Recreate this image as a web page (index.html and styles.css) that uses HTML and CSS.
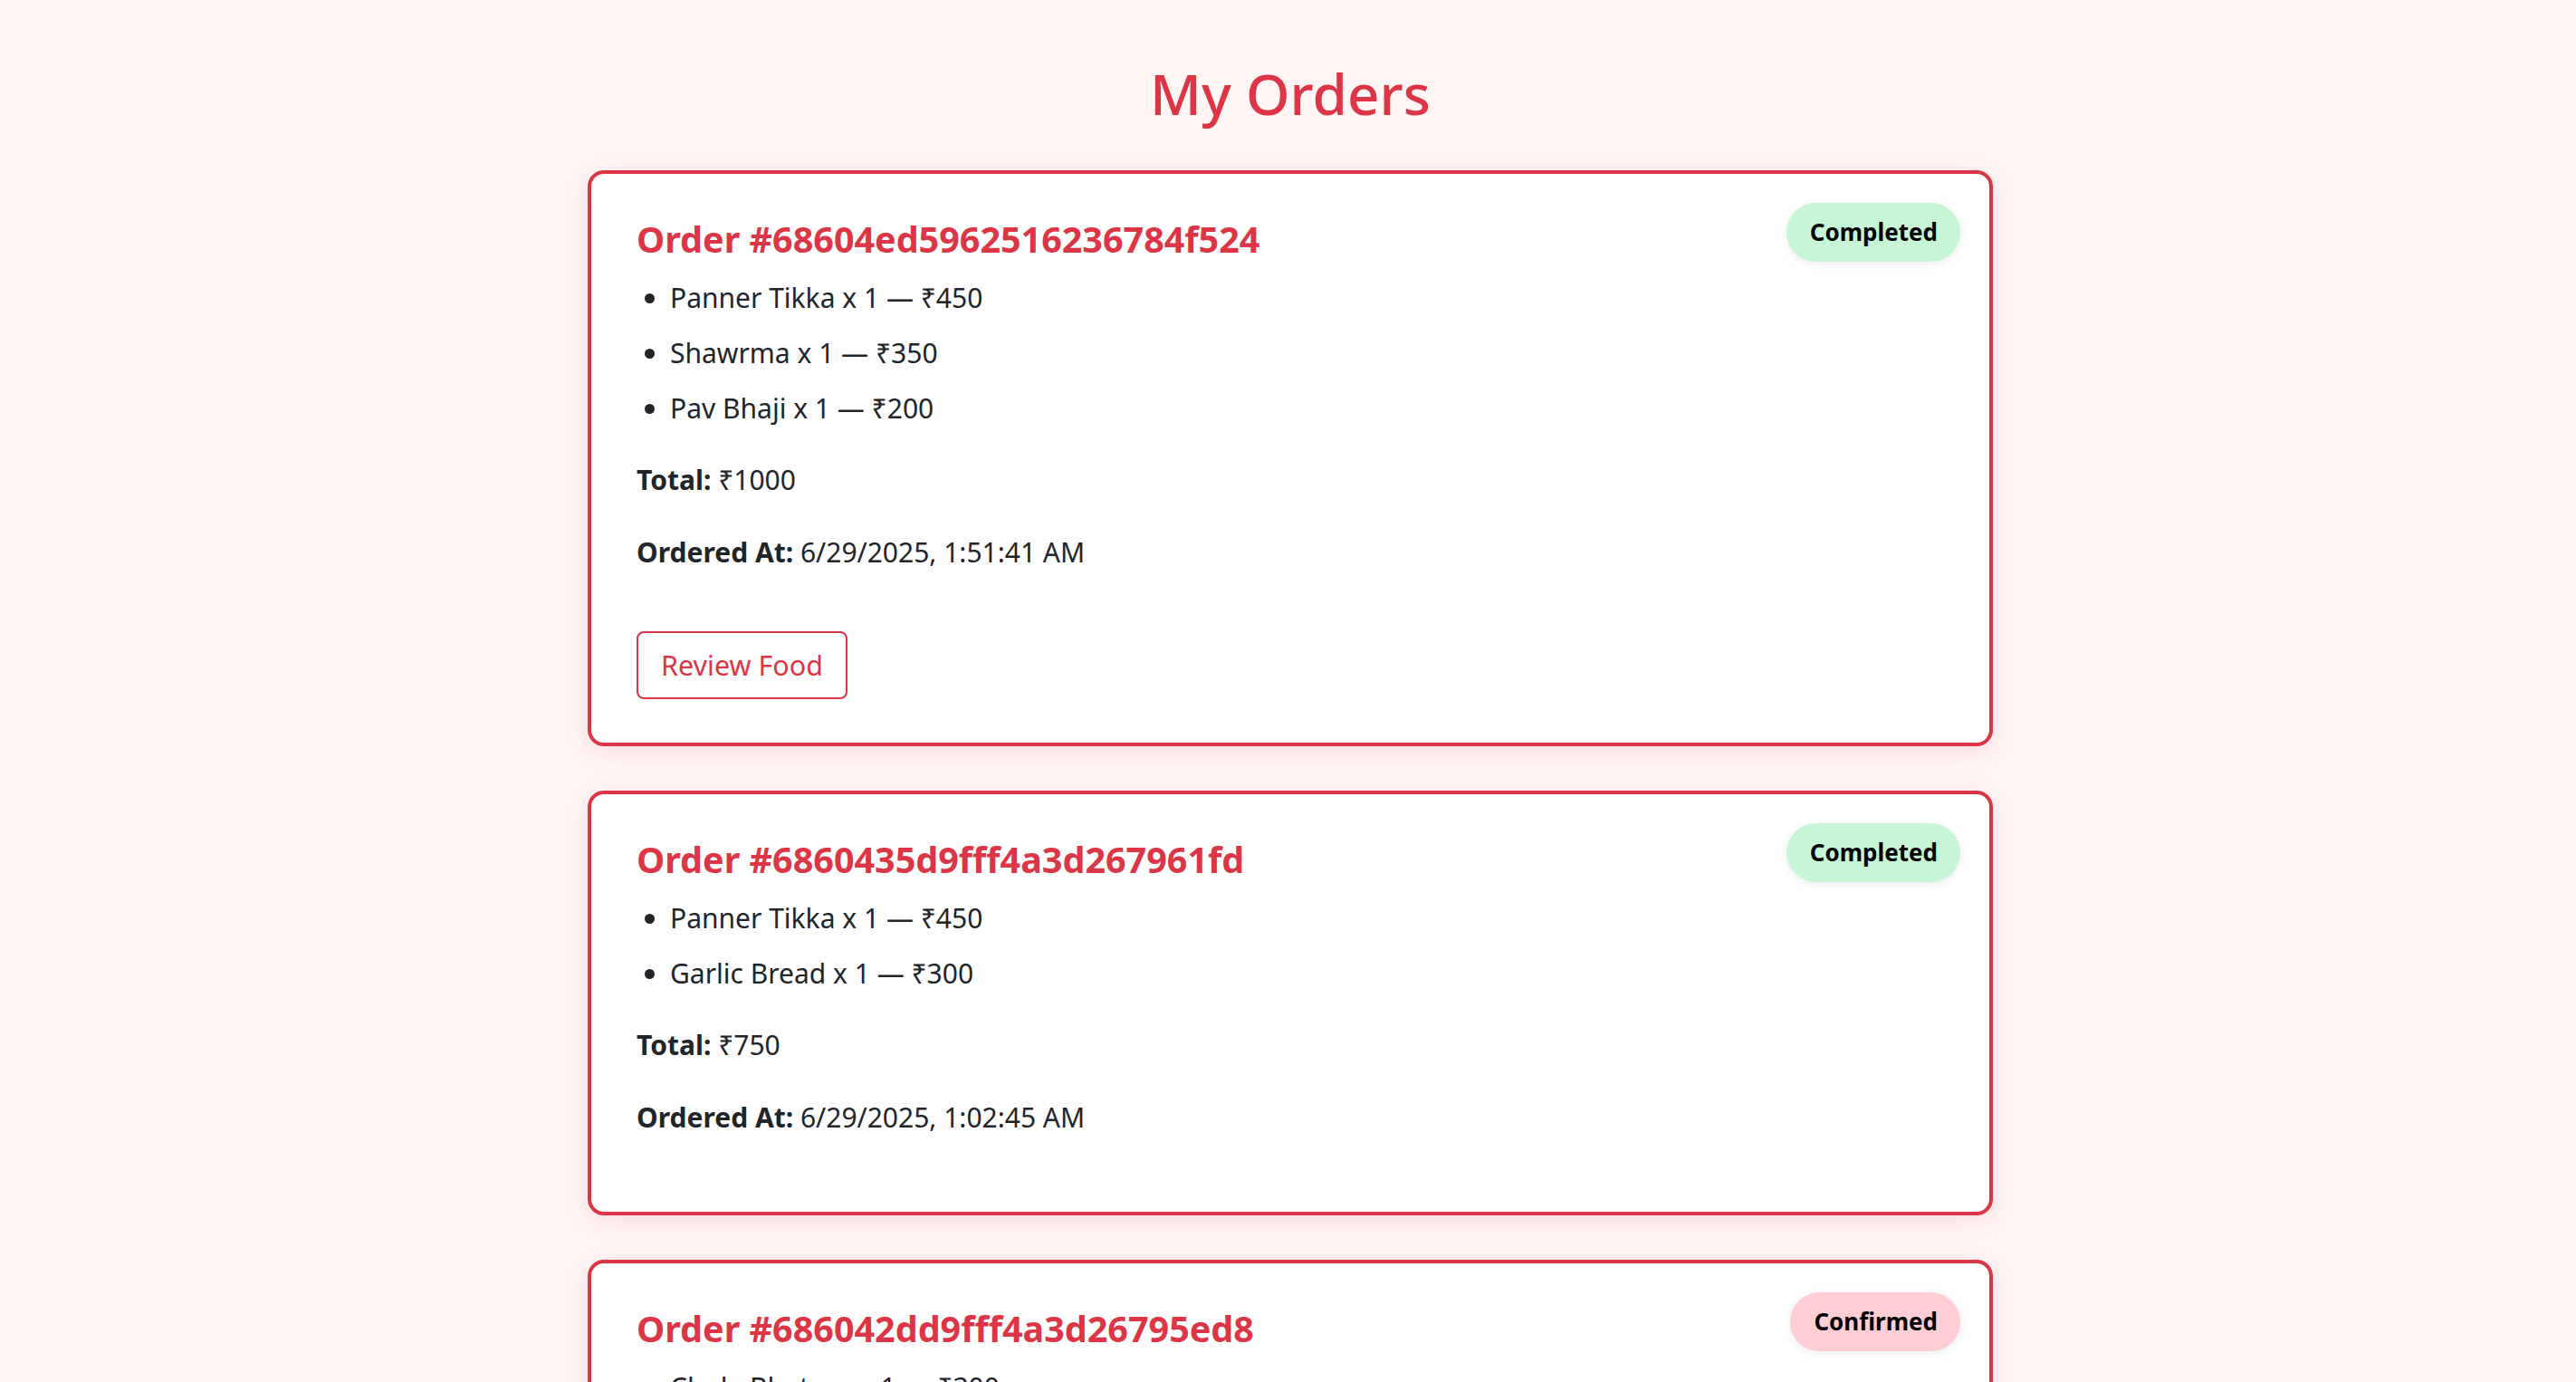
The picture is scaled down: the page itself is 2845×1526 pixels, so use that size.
FILE: index.html
```html
<!DOCTYPE html>
<html lang="en">
<head>
<meta charset="utf-8">
<title>My Orders</title>
<link rel="stylesheet" href="styles.css">
</head>
<body>
<main class="page">
  <h1 class="page-title">My Orders</h1>
  <section class="orders">
    <article class="order-card">
      <span class="status status-completed">Completed</span>
      <h3 class="order-id">Order #68604ed5962516236784f524</h3>
      <ul class="items">
        <li>Panner Tikka x 1 — ₹450</li>
        <li>Shawrma x 1 — ₹350</li>
        <li>Pav Bhaji x 1 — ₹200</li>
      </ul>
      <p class="meta"><strong>Total:</strong> ₹1000</p>
      <p class="meta meta-date"><strong>Ordered At:</strong> 6/29/2025, 1:51:41 AM</p>
      <button class="review-btn" type="button">Review Food</button>
    </article>
    <article class="order-card">
      <span class="status status-completed">Completed</span>
      <h3 class="order-id">Order #6860435d9fff4a3d267961fd</h3>
      <ul class="items">
        <li>Panner Tikka x 1 — ₹450</li>
        <li>Garlic Bread x 1 — ₹300</li>
      </ul>
      <p class="meta"><strong>Total:</strong> ₹750</p>
      <p class="meta meta-date"><strong>Ordered At:</strong> 6/29/2025, 1:02:45 AM</p>
    </article>
    <article class="order-card">
      <span class="status status-confirmed">Confirmed</span>
      <h3 class="order-id">Order #686042dd9fff4a3d26795ed8</h3>
      <ul class="items">
        <li>Chole Bhature x 1 — ₹300</li>
      </ul>
      <p class="meta"><strong>Total:</strong> ₹300</p>
      <p class="meta meta-date"><strong>Ordered At:</strong> 6/29/2025, 12:58:10 AM</p>
    </article>
  </section>
</main>
</body>
</html>
```
FILE: styles.css
```css
* { box-sizing: border-box; }

html, body {
  margin: 0;
  padding: 0;
  background: #fff5f5;
}

body {
  font-family: "Noto Sans", "Open Sans", sans-serif;
  color: #212529;
  padding-left: 5px;
}

.page {
  width: 1552px;
  margin: 0 auto;
  padding-bottom: 60px;
}

.page-title {
  margin: 70px 0 52px;
  font-size: 62px;
  line-height: 66px;
  font-weight: 500;
  color: #dc3545;
  text-align: center;
}

.orders {
  display: flex;
  flex-direction: column;
  gap: 49px;
}

.order-card {
  position: relative;
  display: flex;
  flex-direction: column;
  align-items: flex-start;
  background: #ffffff;
  border: 4px solid #dc3545;
  border-radius: 18px;
  padding: 48px 48px 48px 50px;
  box-shadow: 0 6px 26px rgba(220, 53, 69, 0.13);
}

.status {
  position: absolute;
  top: 32px;
  right: 32px;
  padding: 16px 25px 16px 26px;
  font-size: 26px;
  line-height: 33px;
  font-weight: 700;
  color: #000;
  border-radius: 999px;
  box-shadow: 0 2px 10px rgba(0, 0, 0, 0.08);
}

.status-completed { background: #c6f6d5; }
.status-confirmed { background: #fecdd6; }

.order-id {
  margin: 0;
  font-size: 39.5px;
  line-height: 48px;
  font-weight: 700;
  color: #dc3545;
}

.items {
  margin: 18px 0 34px;
  padding-left: 37px;
  font-size: 30px;
  line-height: 45px;
}

.items li { margin-bottom: 16px; }
.items li:last-child { margin-bottom: 0; }

.meta {
  margin: 0;
  font-size: 30px;
  line-height: 45px;
}

.meta strong { font-weight: 700; }

.meta-date {
  margin-top: 35px;
  margin-bottom: 34px;
}

.review-btn {
  margin-top: 31px;
  height: 75px;
  padding: 0 25px;
  font-family: inherit;
  font-size: 30.5px;
  line-height: 71px;
  color: #dc3545;
  background: #ffffff;
  border: 2px solid #dc3545;
  border-radius: 8px;
  cursor: pointer;
}
```
